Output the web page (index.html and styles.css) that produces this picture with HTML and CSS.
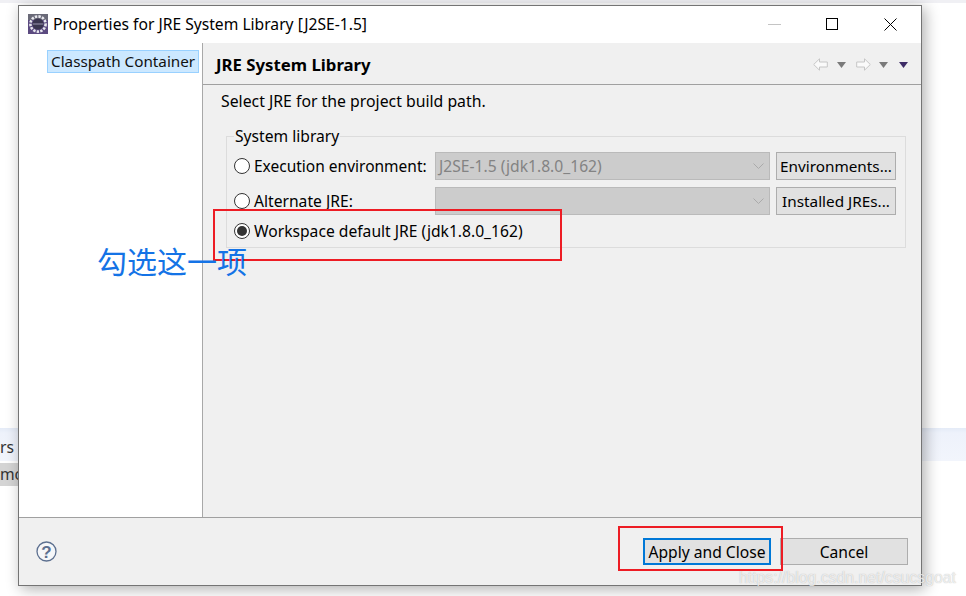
FILE: index.html
```html
<!DOCTYPE html>
<html lang="en">
<head>
<meta charset="utf-8">
<title>Properties for JRE System Library</title>
<link rel="stylesheet" href="styles.css">
</head>
<body>
<div class="desk">
  <div class="desk-top"></div>
  <div class="desk-band"><span class="desk-text">rs 8</span></div>
  <div class="desk-row"><span class="desk-text">mo</span></div>

  <div class="dialog">
    <header class="titlebar">
      <svg class="app-icon" width="20" height="20" viewBox="0 0 20 20">
        <rect width="20" height="20" fill="#5b4a80"/>
        <path d="M0 0h20v6H0z" fill="#6a6a78"/>
        <circle cx="10" cy="10" r="7.6" fill="none" stroke="#e8e8ee" stroke-width="2.6" stroke-dasharray="2.4 1.2"/>
        <circle cx="10" cy="10" r="5.6" fill="#3a3550"/>
        <path d="M4.8 10h10.4" stroke="#8a86a0" stroke-width="1.2"/>
      </svg>
      <span class="title">Properties for JRE System Library [J2SE-1.5]</span>
      <div class="win-controls">
        <svg class="win-btn" width="13" height="13" viewBox="0 0 13 13"><path d="M0 6.500h13" stroke="#c4c4c4"/></svg>
        <svg class="win-btn" width="13" height="13" viewBox="0 0 13 13"><rect x=".5" y=".5" width="11" height="11" fill="none" stroke="#000"/></svg>
        <svg class="win-btn" width="13" height="13" viewBox="0 0 13 13"><path d="M.5.500l12 12M12.500.500l-12 12" stroke="#000" fill="none"/></svg>
      </div>
    </header>
    <div class="middle">
      <aside class="sidebar">
        <div class="tree-item">Classpath Container</div>
      </aside>
      <main class="content">
        <div class="page-head">
          <h1 class="page-title">JRE System Library</h1>
          <div class="nav">
            <svg class="n-back" width="15" height="13" viewBox="0 0 15 13"><path d="M.7 6.500L6.500.8v3.200h7.800v5H6.500v3.200z" fill="#fafafa" stroke="#c6c6c6"/></svg>
            <svg class="n-t1" width="9" height="6" viewBox="0 0 9 6"><path d="M0 0h9L4.500 6z" fill="#7a7a7a"/></svg>
            <svg class="n-fwd" width="15" height="13" viewBox="0 0 15 13"><path d="M14.300 6.500L8.500.8v3.200H.7v5h7.800v3.200z" fill="#fafafa" stroke="#c6c6c6"/></svg>
            <svg class="n-t2" width="9" height="6" viewBox="0 0 9 6"><path d="M0 0h9L4.500 6z" fill="#7a7a7a"/></svg>
            <svg class="n-menu" width="9" height="6" viewBox="0 0 9 6"><path d="M0 0h9L4.500 6z" fill="#3d2c66"/></svg>
          </div>
        </div>
        <div class="page-body">
          <p class="desc">Select JRE for the project build path.</p>
          <fieldset class="group">
            <legend class="legend">System library</legend>
            <div class="grid">
              <label class="radio tight"><span class="dot"></span>Execution environment:</label>
              <div class="combo"><span>J2SE-1.5 (jdk1.8.0_162)</span><svg width="11" height="6" viewBox="0 0 11 6"><path d="M.5.500l5 5 5-5" fill="none" stroke="#aaa"/></svg></div>
              <button class="btn side-btn" type="button">Environments...</button>
              <label class="radio"><span class="dot"></span>Alternate JRE:</label>
              <div class="combo"><span></span><svg width="11" height="6" viewBox="0 0 11 6"><path d="M.5.500l5 5 5-5" fill="none" stroke="#aaa"/></svg></div>
              <button class="btn side-btn" type="button">Installed JREs...</button>
              <label class="radio third"><span class="dot on"></span>Workspace default JRE (jdk1.8.0_162)</label>
            </div>
          </fieldset>
        </div>
      </main>
    </div>
    <footer class="footer">
      <svg class="help" width="21" height="21" viewBox="0 0 21 21">
        <circle cx="10.500" cy="10.500" r="9.500" fill="#f6f7f9" stroke="#5d7090" stroke-width="1.300"/>
        <text x="10.500" y="16.500" text-anchor="middle" class="help-mark">?</text>
      </svg>
      <button class="btn foot-btn primary" type="button">Apply and Close</button>
      <button class="btn foot-btn" type="button">Cancel</button>
    </footer>
  </div>

  <div class="mark mark-a"></div>
  <div class="mark mark-b"></div>
  <div class="note">勾选这一项</div>
  <div class="watermark">https://blog.csdn.net/csucsgoat</div>
</div>
</body>
</html>
```
FILE: styles.css
```css
* { box-sizing: border-box; }
html, body { margin: 0; padding: 0; }
body {
  width: 966px;
  height: 596px;
  overflow: hidden;
  background: #fff;
  font-family: "Noto Sans", "Open Sans", sans-serif;
  font-size: 15.65px;
  color: #000;
}
.desk { position: relative; width: 966px; height: 596px; overflow: hidden; }
.desk-top { position: absolute; left: 0; top: 0; width: 966px; height: 3px; background: #f0f0f4; }
.desk-band {
  position: absolute; left: 0; top: 428px; width: 966px; height: 33px;
  background: linear-gradient(#e4ebf7 0, #eef2fb 5px, #f2f5fc 100%);
}
.desk-row { position: absolute; left: 0; top: 463px; width: 30px; height: 23px; background: #d4d4d4; }
.desk-text { position: absolute; left: 0; top: 9px; font-size: 15.65px; line-height: 20px; color: #333; white-space: nowrap; }
.desk-row .desk-text { top: 1px; }

.dialog {
  position: absolute; left: 18px; top: 5px; width: 904px; height: 581px;
  display: flex; flex-direction: column;
  background: #fff;
  border: 1px solid #747474;
  box-shadow: 3px 3px 14px rgba(0,0,0,.32);
}
.titlebar { height: 37px; flex: none; display: flex; align-items: center; padding-left: 9px; padding-bottom: 1px; background: #fff; }
.app-icon { flex: none; }
.title { margin-left: 5px; white-space: nowrap; }
.win-controls { margin-left: auto; display: flex; align-items: center; gap: 45px; padding-right: 24px; }
.win-btn { display: block; }

.middle { flex: 1; display: flex; min-height: 0; }
.sidebar { width: 184px; flex: none; background: #fff; border-right: 1px solid #a8a8a8; padding: 7px 3px 0 28px; }
.tree-item {
  height: 23px; line-height: 21px; padding-left: 3px;
  background: #cce8ff; border: 1px solid #99d1ff;
  font-size: 15.25px; white-space: nowrap; color: #111;
}
.content { flex: 1; background: #f0f0f0; display: flex; flex-direction: column; min-width: 0; }
.page-head {
  height: 42px; flex: none; display: flex; align-items: center;
  padding: 2px 13px 0 13px; border-bottom: 1px solid #a0a0a0;
}
.page-title { margin: 0; font-size: 16.75px; font-weight: 700; line-height: 22px; }
.nav { margin-left: auto; display: flex; align-items: center; }
.nav svg { display: block; }
.n-t1 { margin-left: 9px; }
.n-fwd { margin-left: 10px; }
.n-t2 { margin-left: 8px; }
.n-menu { margin-left: 11px; }
.page-body { flex: 1; padding: 5px 15px 0 18px; }
.desc { margin: 0; line-height: 22px; font-size: 15.8px; }
.group {
  margin: 14px 0 0 5px; padding: 0 9px 0 7px; height: 122px; min-width: 0;
  border: 1px solid #dcdcdc;
}
.legend { padding: 0 1px; line-height: 20px; }
.grid {
  display: grid; grid-template-columns: 195px 335px 120px; column-gap: 6px;
  grid-template-rows: 28px 28px 28px; row-gap: 7px;
  margin-top: 6px;
}
.radio { display: flex; align-items: center; gap: 4px; white-space: nowrap; }
.tight { font-size: 15.5px; }
.third { grid-column: 1 / 4; height: 18px; align-self: start; }
.dot {
  width: 16px; height: 16px; flex: none; border-radius: 50%;
  background: #fff; border: 1px solid #333; position: relative;
}
.dot.on::after {
  content: ""; position: absolute; left: 2px; top: 2px; width: 10px; height: 10px;
  border-radius: 50%; background: #333;
}
.combo {
  display: flex; align-items: center; justify-content: space-between;
  background: #cccccc; border: 1px solid #bababa; padding: 0 5px 0 3px;
  color: #838383; white-space: nowrap;
}
.btn {
  font-family: inherit; font-size: 15.65px; color: #000; padding: 0;
  background: #e1e1e1; border: 1px solid #adadad; white-space: nowrap;
}
.side-btn { font-size: 15.3px; }
.footer {
  height: 68px; flex: none; display: flex; align-items: center;
  background: #f0f0f0; border-top: 1px solid #a0a0a0; padding: 0 13px 0 17px; gap: 9px;
}
.help { margin-right: auto; display: block; }
.help-mark { font-family: "Liberation Sans", sans-serif; font-size: 17px; font-weight: 700; fill: #5d7090; }
.foot-btn { width: 128px; height: 27px; }
.primary { border: 2px solid #0078d7; }

.mark { position: absolute; border: 2px solid #ed1c24; }
.mark-a { left: 213px; top: 209px; width: 349px; height: 52px; }
.mark-b { left: 618px; top: 526px; width: 165px; height: 45px; }
.note {
  position: absolute; left: 97px; top: 239px; font-size: 30px; line-height: 42px;
  font-family: "Noto Sans CJK SC", sans-serif; color: #1473e6; white-space: nowrap;
}
.watermark {
  position: absolute; left: 739px; top: 568px; font-family: "Liberation Sans", sans-serif;
  font-size: 15.8px; line-height: 20px; color: rgba(255,255,255,.72); white-space: nowrap;
  text-shadow: 0 0 1px rgba(120,120,120,.55);
}
```
